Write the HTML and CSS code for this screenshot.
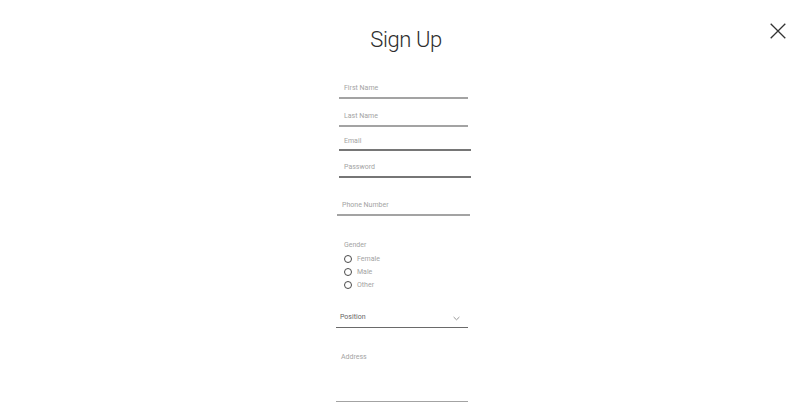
FILE: index.html
```html
<!DOCTYPE html>
<html>
<head>
<meta charset="utf-8">
<link rel="stylesheet" href="styles.css">
</head>
<body>
<div class="page">
  <div class="side"></div>
  <form class="form">
    <h1 class="title">Sign Up</h1>
    <div class="field f1 light"><span class="label">First Name</span></div>
    <div class="field f2 light"><span class="label">Last Name</span></div>
    <div class="field f3 dark"><span class="label">Email</span></div>
    <div class="field f4 dark"><span class="label">Password</span></div>
    <div class="field f5 light"><span class="label">Phone Number</span></div>
    <div class="gender">
      <div class="label">Gender</div>
      <div class="radio"><span class="dot"></span><span class="rlabel">Female</span></div>
      <div class="radio"><span class="dot"></span><span class="rlabel">Male</span></div>
      <div class="radio"><span class="dot"></span><span class="rlabel">Other</span></div>
    </div>
    <div class="field select darker">
      <span class="label strong">Position</span>
      <svg class="chev" width="7" height="5" viewBox="0 0 7 5"><path d="M0.6 1 L3.5 3.8 L6.4 1" fill="none" stroke="#8a8a8a" stroke-width="0.9"/></svg>
    </div>
    <div class="field address light"><span class="label">Address</span></div>
  </form>
  <div class="side right">
    <button class="close" type="button" aria-label="Close">
      <svg width="16" height="16" viewBox="0 0 16 16"><path d="M0.7 0.7 L15.3 15.3 M15.3 0.7 L0.7 15.3" stroke="#333" stroke-width="1.3" fill="none"/></svg>
    </button>
  </div>
</div>
</body>
</html>
```
FILE: styles.css
```css
html, body {
  margin: 0;
  padding: 0;
  background: #ffffff;
  font-family: Roboto, "Liberation Sans", sans-serif;
}
.page {
  display: grid;
  grid-template-columns: 335px 136px 335px;
  height: 402px;
  overflow: hidden;
}
.form {
  display: flex;
  flex-direction: column;
  margin: 0;
}
.title {
  margin: 25px 0 0 0;
  padding-left: 6px;
  font-size: 22px;
  line-height: 30px;
  font-weight: 300;
  color: #2e2e2e;
  text-align: center;
  letter-spacing: -0.4px;
  white-space: nowrap;
}
.field {
  display: flex;
  align-items: center;
  padding: 0 0 4px 5px;
  border-bottom: 2px solid #a3a3a3;
}
.field.light { border-bottom-color: #a3a3a3; }
.field.dark { border-bottom-color: #767676; }
.field.darker { border-bottom-color: #6a6a6a; border-bottom-width: 1.5px; }
.label {
  display: block;
  font-size: 7px;
  line-height: 10px;
  color: #a3a3a3;
  white-space: nowrap;
}
.label.strong { color: #666; }
.f1 { margin: 28px 0 0 4px; width: 124px; }
.f2 { margin: 12px 0 0 4px; width: 124px; }
.f3 { margin: 9px 0 0 4px; width: 127px; padding-bottom: 3px; }
.f4 { margin: 11px 0 0 4px; width: 127px; }
.f5 { margin: 22px 0 0 2px; width: 128px; padding-left: 5px; }
.gender {
  margin: 24px 0 0 9px;
  display: flex;
  flex-direction: column;
}
.radio {
  display: flex;
  align-items: center;
  height: 13px;
}
.gender .label { margin-bottom: 2.5px; }
.dot {
  box-sizing: border-box;
  width: 8px;
  height: 8px;
  border: 1.3px solid #4a4a4a;
  border-radius: 50%;
}
.rlabel {
  font-size: 7px;
  color: #a3a3a3;
  margin-left: 5px;
}
.select {
  margin: 20px 0 0 1px;
  width: 120px;
  padding-left: 4px;
  padding-right: 8px;
  padding-bottom: 5px;
  justify-content: space-between;
}
.chev { display: block; margin-top: 3px; }
.address {
  margin: 24px 0 0 1px;
  width: 127px;
  padding-left: 5px;
  padding-bottom: 39px;
  align-items: flex-start;
}
.side.right {
  display: flex;
  justify-content: flex-end;
  align-items: flex-start;
}
.close {
  margin: 23px 20px 0 0;
  padding: 0;
  border: 0;
  background: none;
  width: 16px;
  height: 16px;
  cursor: pointer;
}
.close svg { display: block; }
```
